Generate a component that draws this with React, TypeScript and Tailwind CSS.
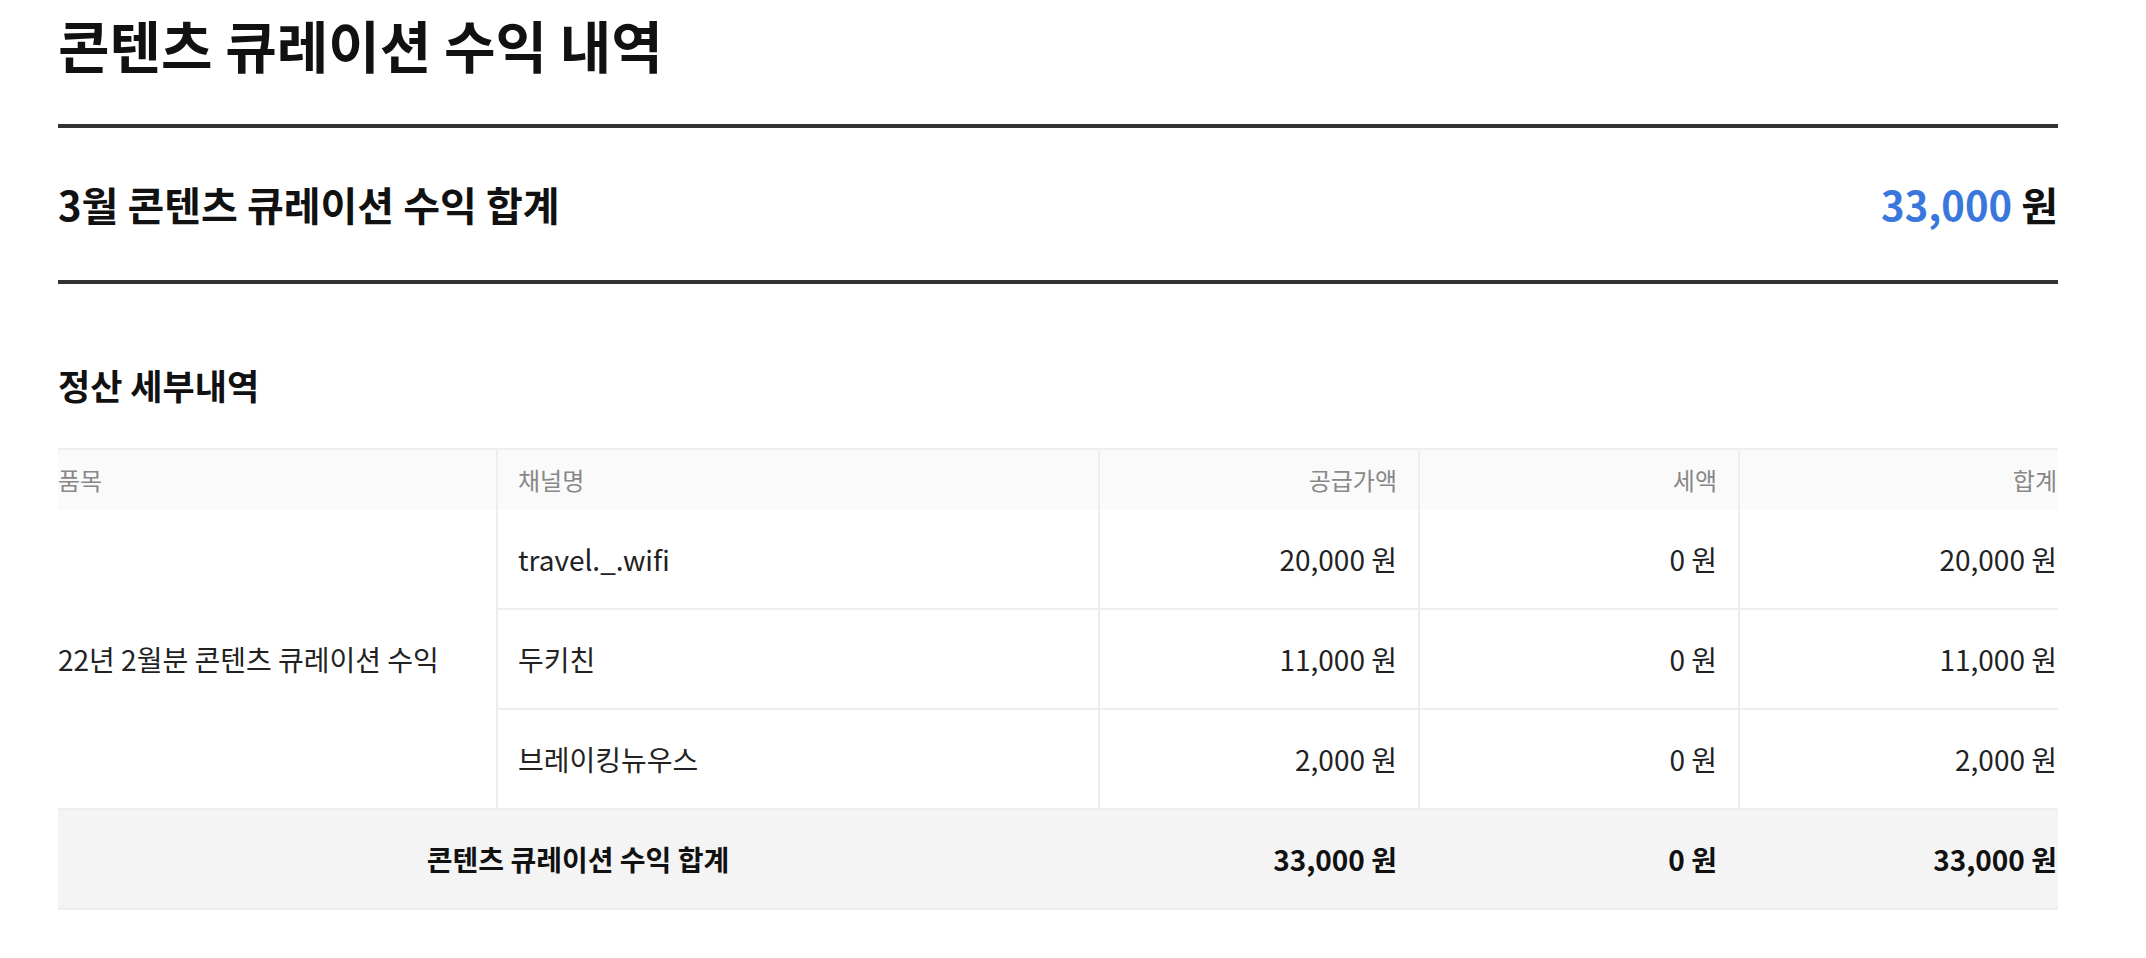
import React from "react";

const rows = [
  { ch: "travel._.wifi", supply: "20,000 원", tax: "0 원", total: "20,000 원" },
  { ch: "두키친", supply: "11,000 원", tax: "0 원", total: "11,000 원" },
  { ch: "브레이킹뉴우스", supply: "2,000 원", tax: "0 원", total: "2,000 원" },
];

export default function App() {
  return (
    <div className="w-[2146px] min-h-[958px] bg-white font-['Noto_Sans_CJK_KR','Noto_Sans_KR',sans-serif] text-[#111]">
      <div className="ml-[58px] w-[2000px]">
        <h1 className="pt-[16px] pb-[52px] text-[56px] leading-[56px] font-bold text-[#111]">
          콘텐츠 큐레이션 수익 내역
        </h1>
        <div className="h-[4px] bg-[#333]" />
        <div className="flex h-[152px] items-center justify-between">
          <div className="text-[40px] leading-[40px] font-bold text-[#111]">3월 콘텐츠 큐레이션 수익 합계</div>
          <div className="text-[40px] leading-[40px] font-bold text-[#111]">
            <span className="text-[#3a77dc]">33,000</span> 원
          </div>
        </div>
        <div className="h-[4px] bg-[#333]" />
        <h2 className="mt-[83px] mb-[46px] text-[35px] leading-[35px] font-bold text-[#111]">
          정산 세부내역
        </h2>
        <div className="w-[2000px] overflow-hidden">
          <table className="w-[2020px] table-fixed border-separate border-spacing-0 text-[28px] text-[#222]">
            <colgroup>
              <col className="w-[438px]" />
              <col className="w-[602px]" />
              <col className="w-[320px]" />
              <col className="w-[320px]" />
              <col className="w-[340px]" />
            </colgroup>
            <thead>
              <tr className="bg-[#fafafa] text-[24px] font-normal text-[#888]">
                <th className="h-[62px] border-t-2 border-[#eeeeee] p-0 text-left align-middle font-normal">품목</th>
                <th className="h-[62px] border-t-2 border-l-2 border-[#eeeeee] pl-[20px] text-left align-middle font-normal">채널명</th>
                <th className="h-[62px] border-t-2 border-l-2 border-[#eeeeee] pr-[21px] text-right align-middle font-normal">공급가액</th>
                <th className="h-[62px] border-t-2 border-l-2 border-[#eeeeee] pr-[21px] text-right align-middle font-normal">세액</th>
                <th className="h-[62px] border-t-2 border-l-2 border-[#eeeeee] pr-[21px] text-right align-middle font-normal">합계</th>
              </tr>
            </thead>
            <tbody>
              {rows.map((r, i) => (
                <tr key={i}>
                  {i === 0 && (
                    <td rowSpan={3} className="border-b-2 border-[#eeeeee] p-0 text-left align-middle">
                      22년 2월분 콘텐츠 큐레이션 수익
                    </td>
                  )}
                  <td className="h-[100px] border-b-2 border-l-2 border-[#eeeeee] pl-[20px] align-middle">{r.ch}</td>
                  <td className="h-[100px] border-b-2 border-l-2 border-[#eeeeee] pr-[21px] text-right align-middle">{r.supply}</td>
                  <td className="h-[100px] border-b-2 border-l-2 border-[#eeeeee] pr-[21px] text-right align-middle">{r.tax}</td>
                  <td className="h-[100px] border-b-2 border-l-2 border-[#eeeeee] pr-[21px] text-right align-middle">{r.total}</td>
                </tr>
              ))}
              <tr className="bg-[#f4f4f4] font-bold text-[#111]">
                <td colSpan={2} className="h-[100px] border-b-2 border-[#eeeeee] text-center align-middle">콘텐츠 큐레이션 수익 합계</td>
                <td className="h-[100px] border-b-2 border-[#eeeeee] pr-[21px] text-right align-middle">33,000 원</td>
                <td className="h-[100px] border-b-2 border-[#eeeeee] pr-[21px] text-right align-middle">0 원</td>
                <td className="h-[100px] border-b-2 border-[#eeeeee] pr-[21px] text-right align-middle">33,000 원</td>
              </tr>
            </tbody>
          </table>
        </div>
      </div>
    </div>
  );
}
